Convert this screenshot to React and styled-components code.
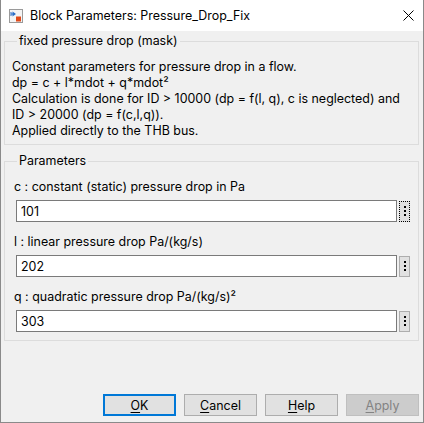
import styled, { createGlobalStyle } from "styled-components";

const GlobalStyle = createGlobalStyle`
  html, body {
    margin: 0;
    padding: 0;
    background: #ffffff;
  }
  * {
    box-sizing: border-box;
  }
`;

const FONT = `Inter, "Noto Sans", sans-serif`;
const SIZE = "12.45px";

const Window = styled.div`
  width: 424px;
  height: 423px;
  display: flex;
  flex-direction: column;
  background: #f0f0f0;
  border: 1px solid #8a8a8a;
  border-top: none;
  font-family: ${FONT};
  font-size: ${SIZE};
  color: #000;
  overflow: hidden;
`;

const TitleBar = styled.div`
  height: 31px;
  flex: none;
  display: flex;
  align-items: center;
  background: #ffffff;
  padding: 0 9px 0 8px;
`;

const TitleText = styled.div`
  flex: 1;
  margin-left: 7px;
  line-height: 16px;
`;

const CloseButton = styled.div`
  width: 12px;
  height: 12px;
  display: flex;
  align-items: center;
  justify-content: center;
`;

const Body = styled.div`
  flex: 1;
  display: flex;
  flex-direction: column;
  padding: 2px 4px 0 3px;
`;

const GroupBox = styled.fieldset`
  margin: ${(p) => p.$top || 0}px 0 0 0;
  padding: ${(p) => p.$padTop}px 8px ${(p) => p.$padBottom}px 7px;
  border: 1px solid #dcdcdc;
  min-width: 0;
`;

const Legend = styled.legend`
  padding: 0 2px;
  margin-left: 5px;
  line-height: 16px;
`;

const Description = styled.div`
  line-height: 16px;
  white-space: nowrap;
`;

const ParamRow = styled.div`
  display: flex;
  flex-direction: column;
  margin-top: ${(p) => (p.$first ? 0 : 12)}px;
`;

const ParamLabel = styled.div`
  line-height: 16px;
  margin-left: 2px;
  margin-bottom: 5px;
`;

const InputLine = styled.div`
  display: flex;
  align-items: center;
  gap: 2px;
  margin-left: 4px;
`;

const TextInput = styled.input`
  width: 381px;
  height: 22px;
  border: 1px solid #7a7a7a;
  background: #fff;
  padding: 0 4px;
  font-family: ${FONT};
  font-size: ${SIZE};
  color: #000;
  outline: none;
`;

const DotsButton = styled.div`
  width: 11px;
  height: 21px;
  display: flex;
  flex-direction: column;
  align-items: center;
  justify-content: center;
  gap: 2px;
  background: #e1e1e1;
  border: 1px ${(p) => (p.$focused ? "dotted #000" : "solid #adadad")};
`;

const Dot = styled.span`
  width: 2px;
  height: 2px;
  background: #000;
`;

const ButtonBar = styled.div`
  margin-top: auto;
  display: flex;
  justify-content: flex-end;
  gap: 8px;
  padding: 0 0 6px 0;
`;

const DialogButton = styled.button`
  width: 73px;
  height: 22px;
  padding: 0;
  font-family: ${FONT};
  font-size: ${SIZE};
  color: ${(p) => (p.disabled ? "#838383" : "#000")};
  background: ${(p) => (p.disabled ? "#cccccc" : "#e1e1e1")};
  border: ${(p) =>
    p.$primary ? "2px solid #0078d7" : p.disabled ? "1px solid #bfbfbf" : "1px solid #adadad"};
  u {
    text-decoration: underline;
    text-underline-offset: 2px;
  }
`;

const BlockIcon = () => (
  <svg width="14" height="14" viewBox="0 0 14 14">
    <rect x="0.5" y="0.5" width="13" height="13" fill="#f4f4f4" stroke="#9a9a9a" />
    <path d="M2 3 L2 7 M2 5 L6 5" stroke="#2a6fc9" strokeWidth="1" />
    <path d="M3.5 2.5 L7 5 L3.5 7.5 Z" fill="#2a6fc9" />
    <rect x="7" y="7.5" width="5" height="5" fill="#e04a1a" />
  </svg>
);

const CloseIcon = () => (
  <svg width="11" height="11" viewBox="0 0 11 11">
    <path d="M0.5 0.5 L10.5 10.5 M10.5 0.5 L0.5 10.5" stroke="#000" strokeWidth="1" />
  </svg>
);

const params = [
  { label: "c : constant (static) pressure drop in Pa", value: "101", focused: true },
  { label: "l : linear pressure drop Pa/(kg/s)", value: "202" },
  { label: "q : quadratic pressure drop Pa/(kg/s)²", value: "303" },
];

const App = () => {
  return (
    <>
      <GlobalStyle />
      <Window>
        <TitleBar>
          <BlockIcon />
          <TitleText>Block Parameters: Pressure_Drop_Fix</TitleText>
          <CloseButton>
            <CloseIcon />
          </CloseButton>
        </TitleBar>
        <Body>
          <GroupBox $padTop={10} $padBottom={5}>
            <Legend>fixed pressure drop (mask)</Legend>
            <Description>Constant parameters for pressure drop in a flow.</Description>
            <Description>dp = c + l*mdot + q*mdot²</Description>
            <Description>
              Calculation is done for ID &gt; 10000 (dp = f(l, q), c is neglected) and
            </Description>
            <Description>ID &gt; 20000 (dp = f(c,l,q)).</Description>
            <Description>Applied directly to the THB bus.</Description>
          </GroupBox>
          <GroupBox $top={8} $padTop={10} $padBottom={8}>
            <Legend>Parameters</Legend>
            {params.map((p, i) => (
              <ParamRow key={p.value} $first={i === 0}>
                <ParamLabel>{p.label}</ParamLabel>
                <InputLine>
                  <TextInput defaultValue={p.value} />
                  <DotsButton $focused={p.focused}>
                    <Dot />
                    <Dot />
                    <Dot />
                  </DotsButton>
                </InputLine>
              </ParamRow>
            ))}
          </GroupBox>
          <ButtonBar>
            <DialogButton $primary>
              <u>O</u>K
            </DialogButton>
            <DialogButton>
              <u>C</u>ancel
            </DialogButton>
            <DialogButton>
              <u>H</u>elp
            </DialogButton>
            <DialogButton disabled>
              <u>A</u>pply
            </DialogButton>
          </ButtonBar>
        </Body>
      </Window>
    </>
  );
};

export default App;
